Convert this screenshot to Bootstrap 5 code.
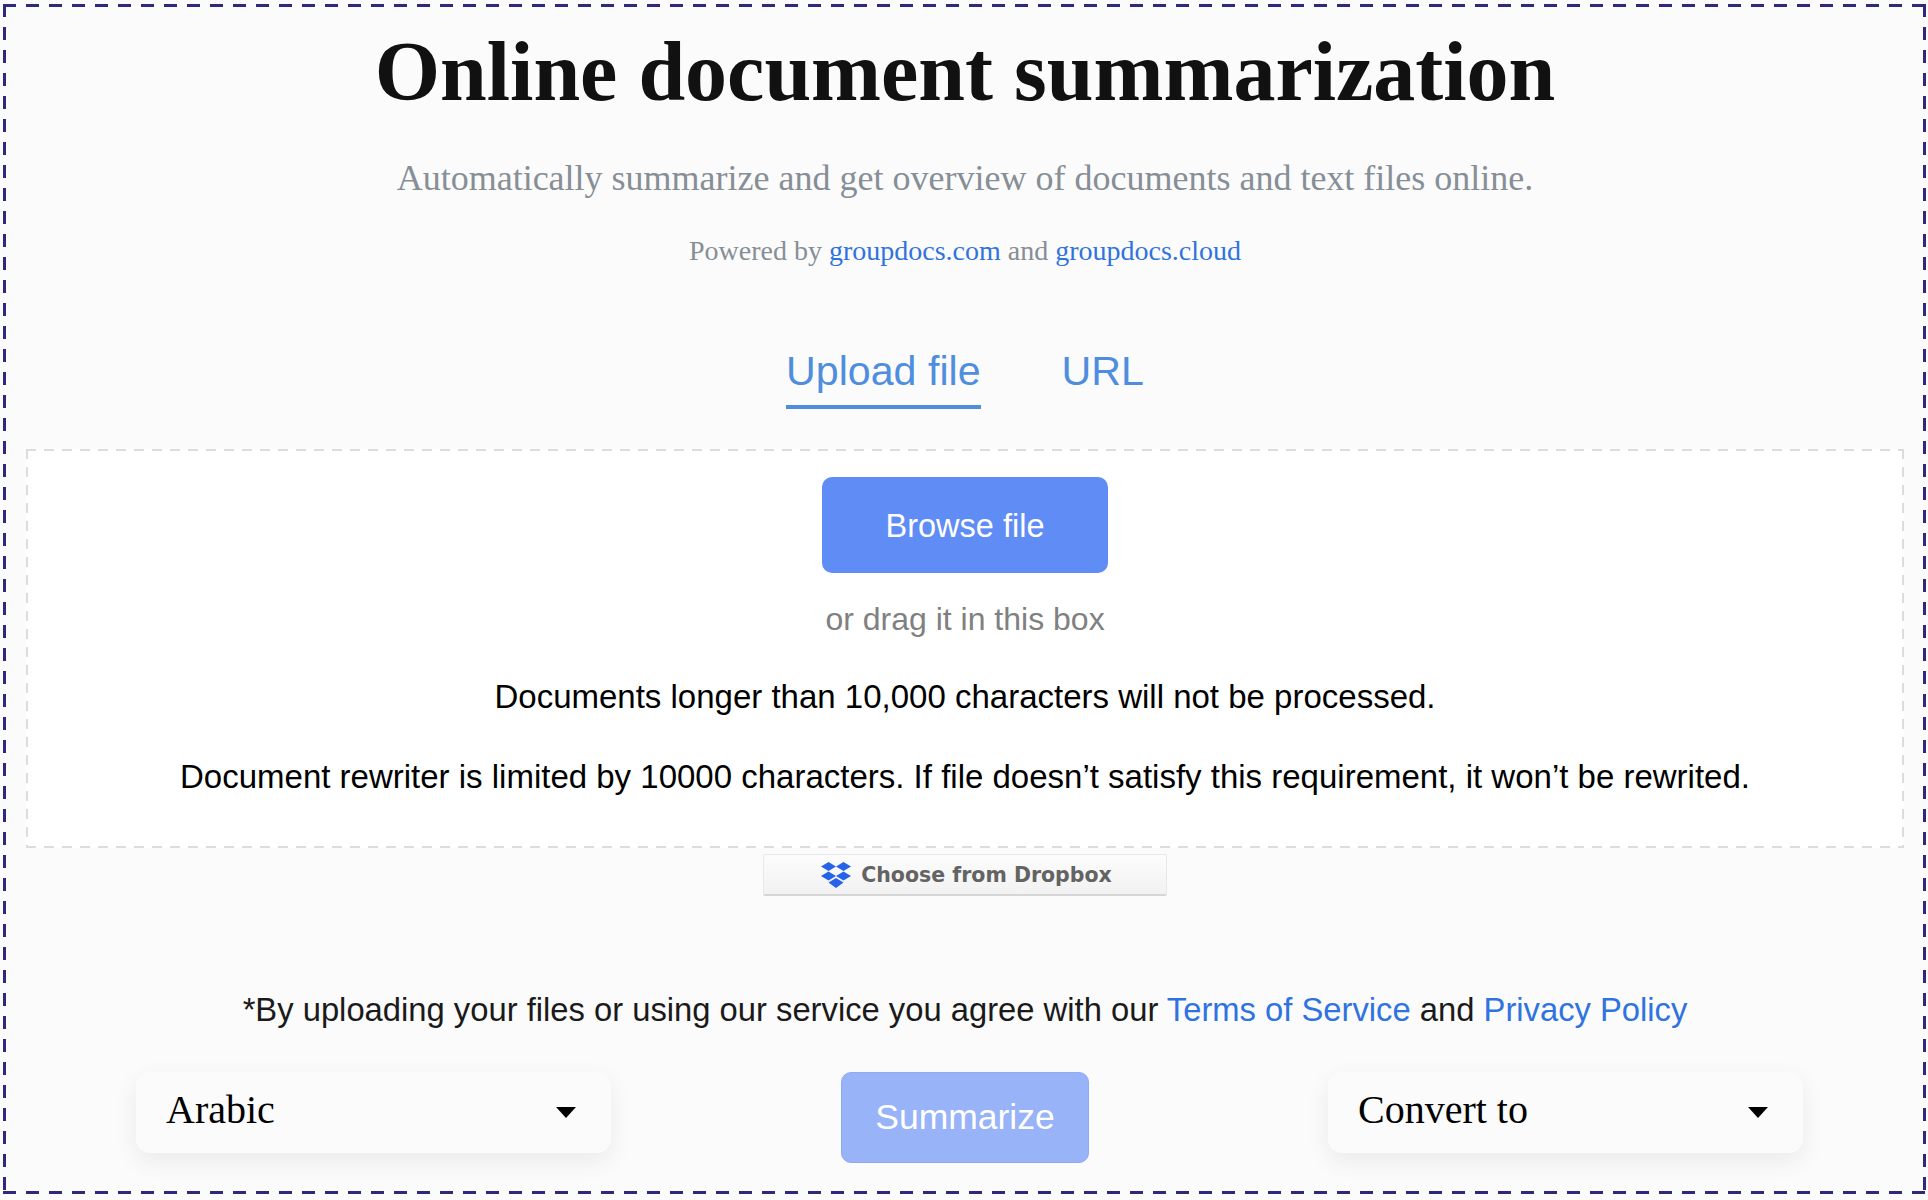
<!DOCTYPE html>
<html lang="en">
<head>
<meta charset="utf-8">
<title>Online document summarization</title>
<link rel="stylesheet" href="https://cdn.jsdelivr.net/npm/bootstrap@5.3.0/dist/css/bootstrap.min.css">
<style>
html, body { height: 100%; }
body { background: #fbfbfb; margin: 0; padding: 4px 2px 0 3px; font-family: "Liberation Sans", Arial, sans-serif; }
.frame { height: 1190px; padding: 0 22px 0 23px; text-align: center;
  background:
    repeating-linear-gradient(90deg, #2d2a7e 0 13px, transparent 13px 23px) left top / 100% 3px no-repeat,
    repeating-linear-gradient(90deg, #2d2a7e 0 13px, transparent 13px 23px) left bottom / 100% 3px no-repeat,
    repeating-linear-gradient(180deg, #2d2a7e 0 13px, transparent 13px 23px) left top / 3px 100% no-repeat,
    repeating-linear-gradient(180deg, #2d2a7e 0 13px, transparent 13px 23px) right top / 3px 100% no-repeat; }
.page-title { font-family: "Liberation Serif", serif; font-weight: 700; font-size: 84px; line-height: 100px; color: #111; margin: 0; padding-top: 18px; }
.page-sub { font-family: "Liberation Serif", serif; font-size: 36px; line-height: 40px; color: #868e96; margin: 36px 0 0; }
.page-power { font-family: "Liberation Serif", serif; font-size: 28px; line-height: 32px; color: #868e96; margin: 37px 0 0; }
.page-power a, .terms a { color: #2f73e0; text-decoration: none; }
.tabs-row { gap: 81px; margin-top: 81px; }
.tab-link { font-size: 41.200px; line-height: 46px; color: #4f8ede; text-decoration: none; padding-bottom: 11px; border-bottom: 4px solid transparent; }
.tab-link.on { border-bottom-color: #4f8ede; }
.drop-box { margin-top: 40px; height: 399px; padding-top: 28px;
  background:
    repeating-linear-gradient(90deg, #dcdcdc 0 10px, transparent 10px 18px) left top / 100% 2px no-repeat,
    repeating-linear-gradient(90deg, #dcdcdc 0 10px, transparent 10px 18px) left bottom / 100% 2px no-repeat,
    repeating-linear-gradient(180deg, #dcdcdc 0 10px, transparent 10px 18px) left top / 2px 100% no-repeat,
    repeating-linear-gradient(180deg, #dcdcdc 0 10px, transparent 10px 18px) right top / 2px 100% no-repeat,
    #fff; }
.browse-btn { width: 286px; height: 96px; padding-top: 3px; font-size: 32.500px; border: 0; border-radius: 10px; background: #5f8cf5; color: #fff; }
.drag-hint { font-size: 32px; line-height: 36px; color: #808080; margin: 28px 0 0; }
.drop-note { font-size: 33px; line-height: 38px; color: #000; margin: 41px 0 0; }
.drop-note + .drop-note { margin-top: 42px; }
.dbx-btn { width: 404px; height: 42px; margin-top: 6px; padding: 0 0 0 3px; border: 1px solid #e8e8e8; border-bottom: 2px solid #d6d6d6; border-radius: 2px; background: linear-gradient(#fcfcfc, #f2f2f2); color: #636363; font: 700 20.500px "DejaVu Sans", sans-serif; gap: 10px; }
.terms { font-size: 32.750px; line-height: 38px; color: #1a1a1a; margin: 95px 0 0; }
.action-row { padding-left: 110px; margin-top: 43px; }
.pick-box { width: 475px; height: 81px; background: #fbfbfb; border-radius: 14px; box-shadow: 0 8px 24px rgba(0,0,0,.07); padding: 0 35px 0 30px; font-family: "Liberation Serif", serif; font-size: 40px; color: #000; }
.pick-label { padding-bottom: 5px; }
.pick-arrow { width: 0; height: 0; border-left: 10px solid transparent; border-right: 10px solid transparent; border-top: 11px solid #000; }
.go-btn { width: 248px; height: 91px; margin: 0 239px 0 230px; border: 1px solid #8eaaf3; border-radius: 10px; background: #98b3f7; color: #fff; font-size: 35.500px; }
</style>
</head>
<body>
<main class="frame">
  <h1 class="page-title">Online document summarization</h1>
  <p class="page-sub">Automatically summarize and get overview of documents and text files online.</p>
  <p class="page-power">Powered by <a href="#">groupdocs.com</a> and <a href="#">groupdocs.cloud</a></p>
  <div class="tabs-row d-flex justify-content-center">
    <a class="tab-link on" href="#">Upload file</a>
    <a class="tab-link" href="#">URL</a>
  </div>
  <section class="drop-box">
    <button class="browse-btn" type="button">Browse file</button>
    <p class="drag-hint">or drag it in this box</p>
    <p class="drop-note">Documents longer than 10,000 characters will not be processed.</p>
    <p class="drop-note">Document rewriter is limited by 10000 characters. If file doesn’t satisfy this requirement, it won’t be rewrited.</p>
  </section>
  <button class="dbx-btn d-inline-flex align-items-center justify-content-center" type="button">
    <svg width="30" height="26" viewBox="0 0 30 26" aria-hidden="true"><path fill="#2563eb" d="M7.500 0 15 4.500 7.500 9 0 4.500zM22.500 0 30 4.500 22.500 9 15 4.500zM7.500 9.500 15 14 7.500 18.500 0 14zM22.500 9.500 30 14 22.500 18.500 15 14zM15 16 22.500 20.500 15 26 7.500 20.500z"/></svg>
    <span>Choose from Dropbox</span>
  </button>
  <p class="terms">*By uploading your files or using our service you agree with our <a href="#">Terms of Service</a> and <a href="#">Privacy Policy</a></p>
  <div class="action-row d-flex align-items-start">
    <div class="pick-box d-flex align-items-center justify-content-between flex-shrink-0"><span class="pick-label">Arabic</span><span class="pick-arrow"></span></div>
    <button class="go-btn flex-shrink-0" type="button">Summarize</button>
    <div class="pick-box d-flex align-items-center justify-content-between flex-shrink-0"><span class="pick-label">Convert to</span><span class="pick-arrow"></span></div>
  </div>
</main>
<script src="https://cdn.jsdelivr.net/npm/bootstrap@5.3.0/dist/js/bootstrap.bundle.min.js"></script>
</body>
</html>
